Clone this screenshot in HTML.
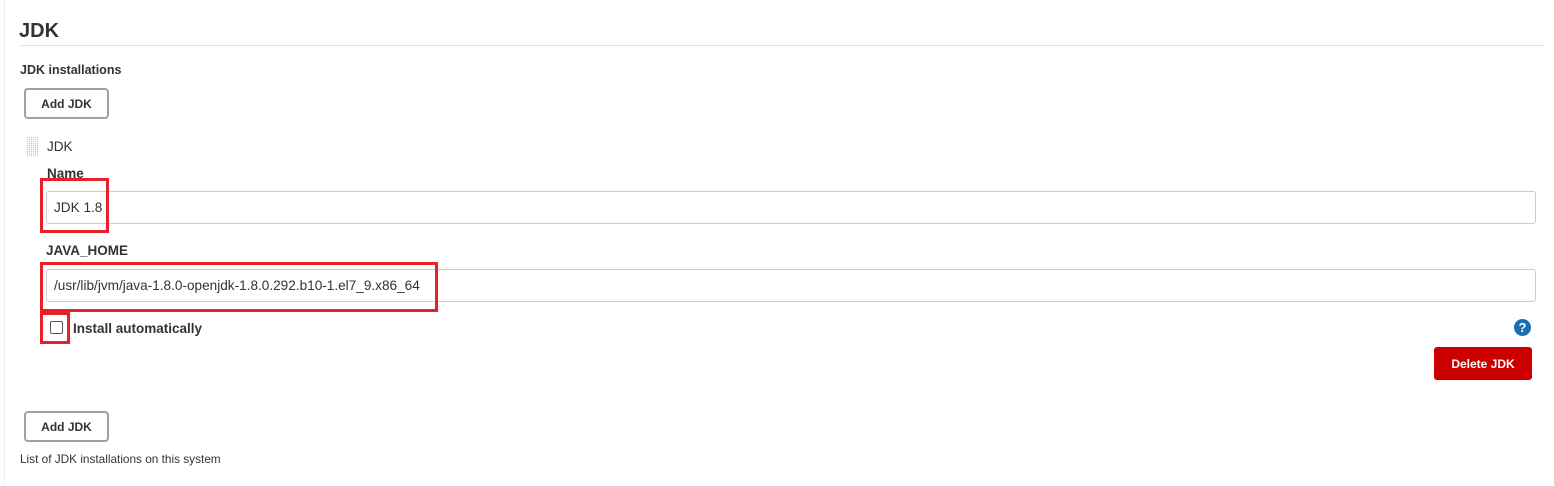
<!DOCTYPE html>
<html><head><meta charset="utf-8"><style>
*{box-sizing:border-box;margin:0;padding:0}
body{width:1554px;height:486px;background:#fff;font-family:"Liberation Sans",sans-serif;color:#333;position:relative;overflow:hidden}
.a{position:absolute}
.btn{position:absolute;border:2px solid #9aa3aa;border-radius:4px;background:#fff;font-weight:bold;font-size:12px;color:#333;display:flex;align-items:center;justify-content:center}
.inp{position:absolute;border:1px solid #ccc;border-radius:3px;background:#fff;font-size:13.6px;color:#333;display:flex;align-items:center;padding-left:7px}
.red{position:absolute;border:3px solid #e8202a}
.lbl{position:absolute;font-weight:bold;font-size:13px;color:#333}
.dots{position:absolute;background-image:linear-gradient(90deg,transparent 1px,#fff 1px),linear-gradient(#ccc 1px,transparent 1px);background-size:2px 2px,2px 2px}
</style></head><body>
<div class="a" style="left:4px;top:0;width:1px;height:486px;background:#eef0f2"></div>
<div class="a" style="left:19px;top:20px;font-size:20px;font-weight:bold;color:#333">JDK</div>
<div class="a" style="left:20px;top:45px;width:1525px;height:1px;background:#dfe1e3"></div>
<div class="lbl" style="left:20px;top:63px;font-size:12.5px">JDK installations</div>
<div class="btn" style="left:24px;top:88px;width:85px;height:31px">Add JDK</div>
<div class="a" style="left:27px;top:137px;width:11px;height:20px;background:repeating-linear-gradient(90deg,#c8c8c8 0 1px,#fff 1px 2px)"></div>
<div class="a" style="left:27px;top:137px;width:11px;height:20px;background:repeating-linear-gradient(0deg,rgba(255,255,255,.7) 0 1px,transparent 1px 2px)"></div>
<div class="a" style="left:47px;top:139px;font-size:13.5px">JDK</div>
<div class="lbl" style="left:47px;top:166px;font-size:13.5px">Name</div>
<div class="inp" style="left:46px;top:191px;width:1490px;height:33px">JDK 1.8</div>
<div class="red" style="left:40px;top:178px;width:69px;height:55px"></div>
<div class="lbl" style="left:46px;top:243px;font-size:13.5px">JAVA_HOME</div>
<div class="inp" style="left:46px;top:269px;width:1490px;height:33px">/usr/lib/jvm/java-1.8.0-openjdk-1.8.0.292.b10-1.el7_9.x86_64</div>
<div class="red" style="left:40px;top:262px;width:398px;height:50px"></div>
<div class="a" style="left:50px;top:321px;width:13px;height:13px;border:1px solid #555;border-radius:2px;background:#fff"></div>
<div class="red" style="left:40px;top:312px;width:30px;height:32px"></div>
<div class="lbl" style="left:73px;top:321px;font-size:13.5px">Install automatically</div>
<div class="a" style="left:1514px;top:319px;width:17px;height:17px;border-radius:50%;background:#1a6fb0;color:#fff;font-weight:bold;font-size:13px;text-align:center;line-height:17px">?</div>
<div class="a" style="left:1434px;top:347px;width:98px;height:33px;border-radius:3px;background:#cc0000;color:#fff;font-weight:bold;font-size:12px;display:flex;align-items:center;justify-content:center">Delete JDK</div>
<div class="btn" style="left:24px;top:411px;width:85px;height:31px">Add JDK</div>
<div class="a" style="left:20px;top:452px;font-size:11.8px;color:#333">List of JDK installations on this system</div>
</body></html>
